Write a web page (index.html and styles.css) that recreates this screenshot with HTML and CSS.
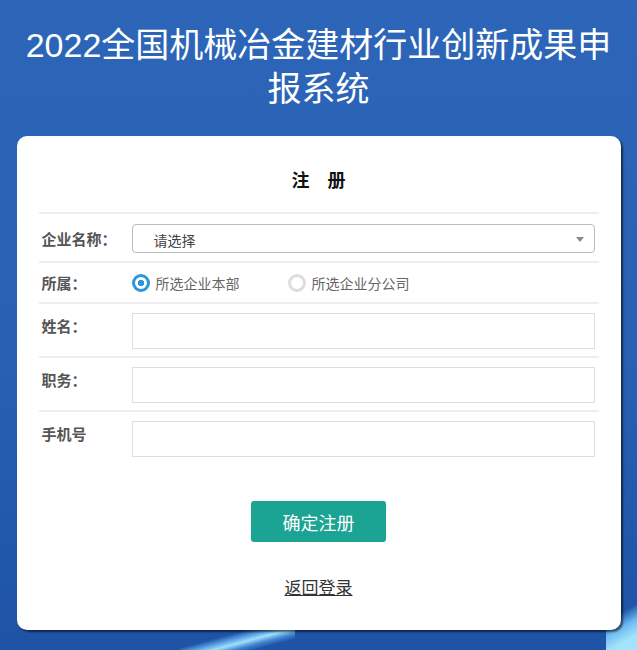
FILE: index.html
```html
<!DOCTYPE html>
<html lang="zh-CN">
<head>
    <meta charset="UTF-8">
    <meta name="viewport" content="width=device-width, initial-scale=1.0">
    <title>注册 - 2022全国机械冶金建材行业创新成果申报系统</title>
    <link rel="stylesheet" href="styles.css">
</head>
<body>
    <div class="waves"></div>
    <h1 class="site-title">2022全国机械冶金建材行业创新成果申报系统</h1>

    <div class="panel">
        <h2>注&emsp;册</h2>

        <div class="form">
            <div class="row row-select">
                <label class="label">企业名称：</label>
                <div class="select">
                    <span>请选择</span>
                    <i class="caret"></i>
                </div>
            </div>

            <div class="row row-radio">
                <label class="label">所属：</label>
                <label class="radio checked"><i></i>所选企业本部</label>
                <label class="radio"><i></i>所选企业分公司</label>
            </div>

            <div class="row">
                <label class="label" for="name">姓名：</label>
                <input type="text" id="name">
            </div>

            <div class="row">
                <label class="label" for="job">职务：</label>
                <input type="text" id="job">
            </div>

            <div class="row last">
                <label class="label" for="phone">手机号</label>
                <input type="text" id="phone">
            </div>
        </div>

        <button class="btn-submit">确定注册</button>

        <a class="back" href="#">返回登录</a>
    </div>
</body>
</html>
```

FILE: styles.css
```css
body {
    margin: 0;
    padding: 0;
    height: 650px;
    overflow: hidden;
    font-family: 'Noto Sans CJK SC', 'Noto Sans', sans-serif;
    background: linear-gradient(180deg, #2d66b8 0%, #2860b3 55%, #1e53a6 100%);
    position: relative;
}
/* 底部光带 */
.waves {
    position: absolute;
    left: 0;
    right: 0;
    bottom: 0;
    height: 60px;
    background:
        linear-gradient(165deg, transparent 0 40%, rgba(110, 190, 250, 0.8) 52%, rgba(170, 230, 255, 0.95) 60%, rgba(90, 170, 240, 0.6) 70%, transparent 80%) 180px 36px / 115px 24px no-repeat,
        linear-gradient(150deg, transparent 0 40%, rgba(120, 205, 255, 0.85) 60%, rgba(170, 235, 255, 0.95) 80%) 606px 0 / 31px 60px no-repeat;
}
.site-title {
    margin: 0;
    padding: 23px 22px 0;
    color: #fff;
    font-family: 'Liberation Sans', 'Noto Sans CJK SC', sans-serif;
    font-weight: normal;
    font-size: 34px;
    line-height: 44px;
    text-align: center;
    position: relative;
}
.panel {
    position: relative;
    width: 560px;
    margin: 25px auto 0;
    padding: 29px 22px 31px;
    background: #fff;
    border-radius: 10px;
    box-shadow: 2px 2px 2px rgba(0, 0, 0, 0.55);
}
.panel h2 {
    margin: 0 0 19px;
    font-size: 18px;
    line-height: 28px;
    color: #111;
    text-align: center;
    font-weight: bold;
}
.form {
    border-top: 2px solid #ededed;
}
.row {
    display: flex;
    align-items: flex-start;
    padding: 9px 0 7px;
    border-bottom: 2px solid #ededed;
}
.row.last {
    border-bottom: none;
}
.label {
    width: 93px;
    padding-left: 3px;
    box-sizing: border-box;
    font-size: 15px;
    font-weight: bold;
    color: #555;
    line-height: 26px;
}
.row-select {
    align-items: center;
    padding: 10px 0 8px;
}
.select {
    flex: 1;
    margin-right: 4px;
    height: 29px;
    border: 1px solid #bbb;
    border-radius: 4px;
    box-sizing: border-box;
    display: flex;
    align-items: center;
    padding: 2px 10px 0 21px;
    font-size: 14px;
    color: #444;
}
.select span {
    flex: 1;
}
.caret {
    width: 0;
    height: 0;
    border-left: 4px solid transparent;
    border-right: 4px solid transparent;
    border-top: 5px solid #888;
}
.row-radio {
    align-items: center;
    padding: 7px 0 6px;
}
.radio {
    display: flex;
    align-items: center;
    font-size: 14px;
    color: #666;
    width: 156px;
}
.radio i {
    width: 12px;
    height: 12px;
    border: 3px solid #ddd;
    border-radius: 50%;
    margin-right: 6px;
    box-sizing: content-box;
}
.radio.checked i {
    border-color: #2e96dd;
    background: radial-gradient(circle, #2e96dd 0 3px, #fff 3.5px);
}
.row input {
    flex: 1;
    margin: 0 4px 0 0;
    height: 36px;
    border: 1px solid #dcdee6;
    box-sizing: border-box;
    font-size: 14px;
    padding: 0 8px;
}
.btn-submit {
    display: block;
    margin: 37px auto 0;
    width: 135px;
    height: 41px;
    border: none;
    border-radius: 3px;
    background: #1ba394;
    color: #fff;
    font-family: inherit;
    font-size: 18px;
}
.back {
    display: block;
    width: max-content;
    margin: 32px auto 0;
    font-size: 17px;
    color: #333;
    text-decoration: underline;
}
```
